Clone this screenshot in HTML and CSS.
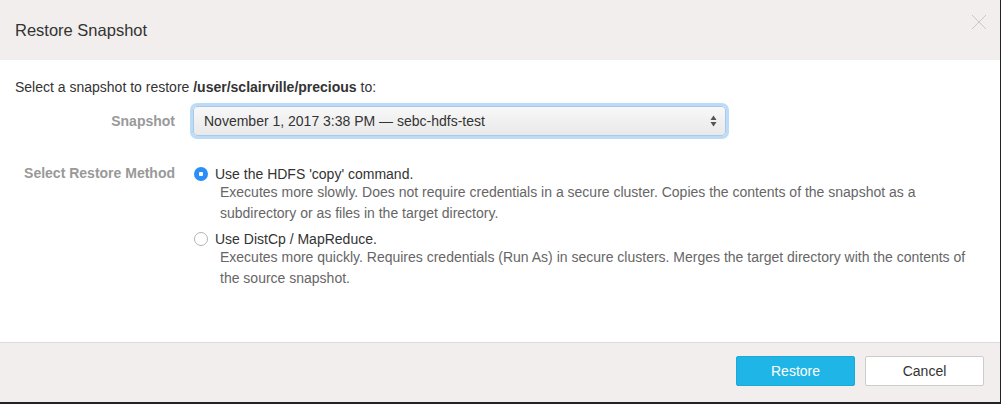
FILE: index.html
```html
<!DOCTYPE html>
<html>
<head>
<meta charset="utf-8">
<link rel="stylesheet" href="styles.css">
</head>
<body>
<div class="modal">
  <div class="modal-header">
    <h3 class="title">Restore Snapshot</h3>
    <span class="close">
      <svg width="16" height="16" viewBox="0 0 16 16"><path d="M1 1L15 15M15 1L1 15" stroke="#c9c6c5" stroke-width="1" fill="none"/></svg>
    </span>
  </div>
  <div class="modal-body">
    <p class="intro">Select a snapshot to restore <b>/user/sclairville/precious</b> to:</p>
    <div class="form-row snapshot-row">
      <label class="form-label">Snapshot</label>
      <div class="select">
        <span>November 1, 2017 3:38 PM — sebc-hdfs-test</span>
        <svg class="arrows" width="7" height="12" viewBox="0 0 7 12"><path d="M3.5 0.5L6.5 5H0.5Z M3.5 11.5L6.5 7H0.5Z" fill="#555"/></svg>
      </div>
    </div>
    <div class="form-row methods">
      <label class="form-label">Select Restore Method</label>
      <div class="options">
        <div class="option">
          <div class="option-title"><span class="radio checked"></span>Use the HDFS 'copy' command.</div>
          <div class="option-desc">Executes more slowly. Does not require credentials in a secure cluster. Copies the contents of the snapshot as a subdirectory or as files in the target directory.</div>
        </div>
        <div class="option">
          <div class="option-title"><span class="radio"></span>Use DistCp / MapReduce.</div>
          <div class="option-desc">Executes more quickly. Requires credentials (Run As) in secure clusters. Merges the target directory with the contents of the source snapshot.</div>
        </div>
      </div>
    </div>
  </div>
  <div class="modal-footer">
    <button class="btn btn-primary">Restore</button>
    <button class="btn">Cancel</button>
  </div>
</div>
</body>
</html>
```

FILE: styles.css
```css
html, body {
  margin: 0;
  padding: 0;
}
body {
  background: #222;
  width: 1001px;
  height: 404px;
  font-family: "Liberation Sans", Arial, sans-serif;
  font-size: 14px;
  color: #333;
}
.modal {
  width: 1000px;
  height: 402px;
  background: #fff;
  display: flex;
  flex-direction: column;
}
.modal-header {
  height: 60px;
  box-sizing: border-box;
  background: #f1eeed;
  display: flex;
  align-items: center;
  justify-content: space-between;
  padding: 0 13px 0 15px;
}
.title {
  margin: 0;
  font-size: 16.5px;
  font-weight: normal;
  color: #333;
}
.close {
  display: flex;
  align-self: flex-start;
  margin-top: 14px;
}
.modal-body {
  flex: 1;
  padding: 0 15px;
}
.intro {
  margin: 17px 0 0;
  line-height: 20px;
}
.intro b {
  font-weight: bold;
}
.form-row {
  display: flex;
  align-items: flex-start;
}
.form-label {
  width: 160px;
  text-align: right;
  font-weight: bold;
  color: #999;
  flex: none;
  line-height: 20px;
}
.snapshot-row {
  margin-top: 9px;
  align-items: center;
}
.select {
  margin-left: 18px;
  width: 533px;
  height: 30px;
  box-sizing: border-box;
  border: 1px solid #a8c9ea;
  box-shadow: 0 0 0 3px #bcdcf5;
  border-radius: 4px;
  background: linear-gradient(#f8f8f8, #e9e9e9);
  display: flex;
  align-items: center;
  justify-content: space-between;
  padding: 0 8px 0 10px;
  color: #333;
}
.arrows {
  display: block;
}
.methods {
  margin-top: 26px;
}
.methods .form-label {
  margin-top: 1px;
}
.options {
  margin-left: 19px;
  flex: 1;
  display: flex;
  flex-direction: column;
  gap: 7px;
  padding-top: 4px;
}
.option-title {
  display: flex;
  align-items: center;
  line-height: 16px;
}
.radio {
  width: 14px;
  height: 14px;
  box-sizing: border-box;
  border-radius: 50%;
  border: 1px solid #b5b5b5;
  background: #fff;
  margin-right: 7px;
  flex: none;
}
.radio.checked {
  border: none;
  background: radial-gradient(circle, #fff 0 2px, #2c8ef8 2.5px);
}
.option-desc {
  margin-left: 26px;
  color: #666;
  line-height: 21px;
}
.modal-footer {
  height: 60px;
  box-sizing: border-box;
  border-top: 1px solid #dcdcdc;
  background: #f1eeed;
  display: flex;
  justify-content: flex-end;
  align-items: center;
  gap: 10px;
  padding: 0 16px 4px 0;
}
.btn {
  width: 119px;
  height: 30px;
  font-family: "Liberation Sans", Arial, sans-serif;
  font-size: 14px;
  border: 1px solid #ccc;
  background: #fff;
  color: #333;
  border-radius: 2px;
}
.btn-primary {
  background: #1fb5e6;
  border-color: #1ca8d8;
  color: #fff;
}
```
